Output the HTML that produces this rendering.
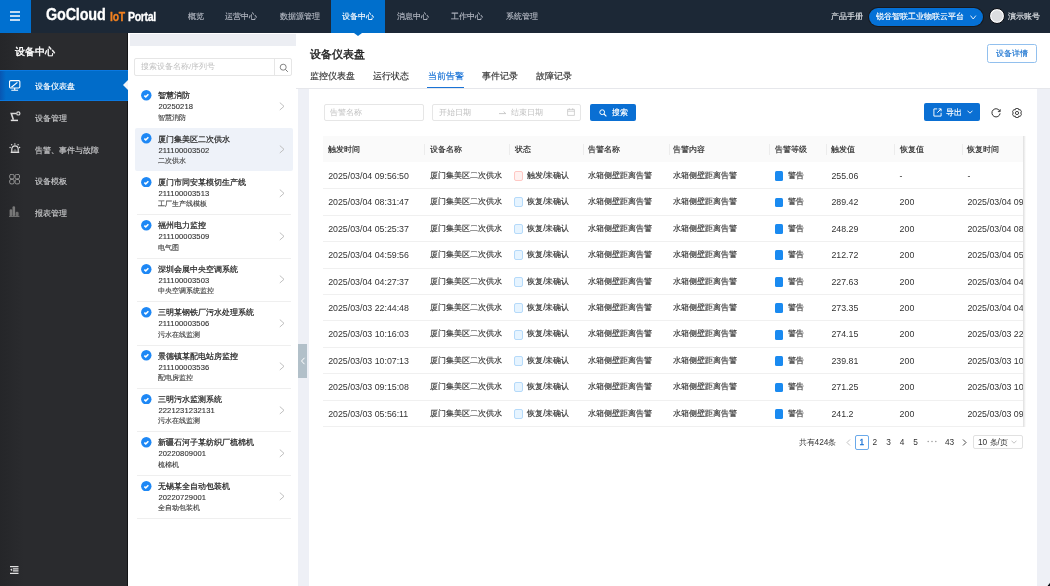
<!DOCTYPE html>
<html><head><meta charset="utf-8">
<style>
*{box-sizing:border-box;margin:0;padding:0}
html,body{width:1050px;height:586px;overflow:hidden;background:#fff;font-family:"Liberation Sans",sans-serif;color:#262626}
.a{position:absolute;white-space:nowrap}
#hdr{position:absolute;left:0;top:0;width:1050px;height:33px;background:#1c2836}
#ham{position:absolute;left:0;top:0;width:31px;height:33px;background:#0070d0}
#ham i{position:absolute;left:9.6px;width:10.7px;height:2px;background:#c3dcf3}
.nav{position:absolute;top:0.3px;height:33px;line-height:33px;font-size:8.4px;color:#b9bec8;-webkit-text-stroke:0.12px currentColor}
#side{position:absolute;left:0;top:33px;width:128px;height:553px;background:linear-gradient(90deg,#252629 0,#2a2b2e 24px,#2a2b2e 100%);border-right:1px solid #131416}
.si{position:absolute;left:0;width:127px;height:31.6px;line-height:31.6px;font-size:8.1px;color:#c9cacc;-webkit-text-stroke:0.15px currentColor}
.si span{position:absolute;left:35px;top:1.4px}
.si svg{position:absolute;left:9px;top:10px}
#list{position:absolute;left:128px;top:33px;width:170px;height:553px;background:#fff}
#main{position:absolute;left:298px;top:33px;width:752px;height:553px;background:#eef0f6}
#mh{position:absolute;left:-2px;top:0;width:754px;height:55.8px;background:#fff;border-bottom:1px solid #e6e7eb}
#card{position:absolute;left:11px;top:55.8px;width:728px;height:498px;background:#fff}
.lt{font-size:8.2px;line-height:12px;color:#262626;-webkit-text-stroke:0.22px #262626}
.ls{font-size:7.6px;line-height:12px;color:#333;letter-spacing:0.12px;-webkit-text-stroke:0.12px #333}
.lsub{font-size:7px;line-height:12px;color:#444;-webkit-text-stroke:0.15px #444}
.th{font-size:8px;line-height:26.2px;color:#262626;-webkit-text-stroke:0.15px #262626;padding-top:1px}
.td{font-size:8.3px;line-height:26.43px;color:#333;-webkit-text-stroke:0.15px #333;margin-top:-0.6px}
.tdn{font-size:8.8px;-webkit-text-stroke:0;margin-top:0;padding-top:0.4px}
.tab{position:absolute;top:68px;font-size:9px;line-height:16px;color:#333;-webkit-text-stroke:0.15px currentColor}
.inp{position:absolute;border:1px solid #e6e6e6;border-radius:2px;background:#fff}
.ph{font-size:8px;color:#c0c0c0}
.pg{position:absolute;top:435.4px;height:14.2px;line-height:14.2px;font-size:8.3px;color:#333;text-align:center}
</style></head>
<body><div id="root" style="position:absolute;left:0;top:0;width:1050px;height:586px;will-change:transform">
<div id="hdr">
  <div id="ham"><i style="top:11px"></i><i style="top:15px"></i><i style="top:19px"></i></div>
  <div class="a" style="left:46px;top:5.4px;font-size:16px;line-height:20px;font-weight:bold;color:#fff;letter-spacing:-0.2px;-webkit-text-stroke:0.3px #fff;transform:scaleX(0.9);transform-origin:0 0">GoCloud</div>
  <div class="a" style="left:110px;top:10px;font-size:12px;line-height:14px;font-weight:bold;color:#f5821f;-webkit-text-stroke:0.3px #f5821f;letter-spacing:-0.3px;transform:scaleX(0.87);transform-origin:0 0">IoT</div>
  <div class="a" style="left:128.1px;top:10px;font-size:12px;line-height:14px;font-weight:bold;color:#fff;-webkit-text-stroke:0.3px #fff;letter-spacing:-0.4px;transform:scaleX(0.88);transform-origin:0 0">Portal</div>
  <div class="nav" style="left:187.5px">概览</div>
  <div class="nav" style="left:225.4px">运营中心</div>
  <div class="nav" style="left:280.4px">数据源管理</div>
  <div class="nav" style="left:331px;width:54.3px;background:#006fcc;color:#fff;text-align:center">设备中心</div>
  <div class="a" style="left:354.4px;top:33px;width:0;height:0;border-left:4px solid transparent;border-right:4px solid transparent;border-top:3.5px solid #006fcc;z-index:5"></div>
  <div class="nav" style="left:396.9px">消息中心</div>
  <div class="nav" style="left:451.2px">工作中心</div>
  <div class="nav" style="left:505.5px">系统管理</div>
  <div class="nav" style="left:831px;color:#e3e6ea">产品手册</div>
  <div class="a" style="left:869.3px;top:8.3px;width:113.6px;height:17.4px;border-radius:9px;background:#0571d6;box-shadow:0 0 0 1px #18191d"></div>
  <div class="a" style="left:876px;top:8.3px;line-height:17.7px;font-size:8px;color:#fff;-webkit-text-stroke:0.15px #fff">锐谷智联工业物联云平台</div>
  <svg class="a" style="left:970px;top:14.5px" width="7" height="5" viewBox="0 0 7 5"><path d="M0.5 0.6 L3.2 4 L5.9 0.6" fill="none" stroke="#e8f1fb" stroke-width="0.95"/></svg>
  <div class="a" style="left:988.6px;top:8px;width:16px;height:16px;border-radius:50%;background:#dcdde0;border:1.2px solid #080b12;box-shadow:inset 0 0 0 1.2px #fafafa"></div>
  <div class="nav" style="left:1008px;color:#e3e6ea">演示账号</div>
</div>
<div id="side">
  <div class="a" style="left:14.6px;top:13px;font-size:10.3px;line-height:12px;color:#fff;-webkit-text-stroke:0.4px #fff">设备中心</div>
  <div class="si" style="top:36.5px;width:128px;background:linear-gradient(90deg,#0856b2 0,#016cc9 6px,#016cc9 100%);box-shadow:inset 0 1px 0 #0a78e0,inset 0 -1px 0 #0a78e0;color:#fff"><svg width="12" height="12" viewBox="0 0 12 12"><rect x="0.55" y="0.65" width="10.3" height="7.4" rx="1.2" fill="none" stroke="#fff" stroke-width="1.1"/><path d="M5.7 8.1V10.2 M2.3 10.3H9.1" fill="none" stroke="#fff" stroke-width="1.1"/><path d="M2.4 7.3L8.4 2.4" fill="none" stroke="#fff" stroke-width="1.2"/></svg><span>设备仪表盘</span></div>
  <div class="a" style="left:122.8px;top:47.3px;width:0;height:0;border-top:5.6px solid transparent;border-bottom:5.6px solid transparent;border-right:5.3px solid #f4f5f8;z-index:3"></div>
  <div class="si" style="top:68.1px"><svg width="12" height="12" viewBox="0 0 12 12"><path d="M1.8 9.4H9" fill="none" stroke="#e0e0e0" stroke-width="1.5"/><path d="M4.4 8.8L2.3 2.5H7" fill="none" stroke="#d8d8d8" stroke-width="1.6"/><circle cx="9.3" cy="2.4" r="1.6" fill="#2a2b2e" stroke="#dcdcdc" stroke-width="1.2"/></svg><span style="top:2px">设备管理</span></div>
  <div class="si" style="top:99.7px"><svg width="12" height="12" viewBox="0 0 12 12"><path d="M1.7 9.3H10.2" fill="none" stroke="#e6e6e6" stroke-width="1.3"/><path d="M2.8 9.3V6A3.2 3.2 0 0 1 9.2 6V9.3" fill="none" stroke="#dedede" stroke-width="1.2"/><path d="M5.1 9V7.6A0.9 0.9 0 0 1 6.9 7.6V9" fill="none" stroke="#bbb" stroke-width="0.7"/><circle cx="5.9" cy="0.9" r="0.75" fill="#ddd"/><circle cx="2.7" cy="1.7" r="0.7" fill="#ddd"/><circle cx="9.1" cy="1.7" r="0.7" fill="#ddd"/><circle cx="1.1" cy="4.5" r="0.7" fill="#ddd"/><circle cx="10.6" cy="4.5" r="0.7" fill="#ddd"/></svg><span style="top:2px">告警、事件与故障</span></div>
  <div class="si" style="top:131.3px"><svg width="12" height="12" viewBox="0 0 12 12"><rect x="0.7" y="0.4" width="4.4" height="4.4" rx="1.4" fill="none" stroke="#a0a0a0" stroke-width="0.9"/><rect x="6.1" y="0.4" width="4.4" height="4.4" rx="1.4" fill="none" stroke="#a0a0a0" stroke-width="0.9"/><rect x="0.7" y="5.5" width="4.4" height="4.4" rx="1.4" fill="none" stroke="#a0a0a0" stroke-width="0.9"/><rect x="6.1" y="5.5" width="4.4" height="4.4" rx="1.4" fill="none" stroke="#a0a0a0" stroke-width="0.9"/></svg><span style="top:2px">设备模板</span></div>
  <div class="si" style="top:162.9px"><svg width="12" height="12" viewBox="0 0 12 12"><rect x="0.6" y="3.2" width="2.6" height="6.8" rx="1.2" fill="#777"/><rect x="3.5" y="0.2" width="2.6" height="9.8" rx="1.2" fill="#7a7a7a"/><rect x="6.6" y="5.8" width="3" height="4.2" rx="1.3" fill="#6d6d6d"/><path d="M0 10.3H10.4" stroke="#808080" stroke-width="1"/></svg><span style="top:2px">报表管理</span></div>
  <svg class="a" style="left:10px;top:533px" width="9" height="8" viewBox="0 0 9 8"><path d="M0 0.6H8.5 M3 2.8H8.5 M3 4.9H8.5 M0 7.3H8.5" fill="none" stroke="#e0e0e0" stroke-width="1.2"/><path d="M2.2 2.3L0.2 3.8L2.2 5.3z" fill="#e0e0e0"/></svg>
</div>
<div id="list"></div>
<div id="main">
  <div id="mh"></div>
  <div id="card"></div>
</div>
<!-- main header -->
<div class="a" style="left:309.8px;top:45.6px;font-size:11.3px;line-height:16px;color:#1f1f1f;-webkit-text-stroke:0.4px #1f1f1f">设备仪表盘</div>
<div class="tab" style="left:310.2px">监控仪表盘</div>
<div class="tab" style="left:373.2px">运行状态</div>
<div class="tab" style="left:427.6px;color:#1a73d6">当前告警</div>
<div class="a" style="left:427.2px;top:86.7px;width:36.6px;height:1.7px;background:#1a73d6"></div>
<div class="tab" style="left:481.7px">事件记录</div>
<div class="tab" style="left:536.1px">故障记录</div>
<div class="a" style="left:987.4px;top:44.1px;width:50px;height:18.7px;border:1px solid #92c0ee;border-radius:2.5px;background:#fff;color:#1a73d0;font-size:8px;line-height:16.7px;padding-top:1.2px;text-align:center;-webkit-text-stroke:0.15px #1a73d0">设备详情</div>
<!-- filters -->
<div class="inp" style="left:323.5px;top:103.5px;width:100px;height:17.4px"></div>
<div class="a ph" style="left:330px;top:103.5px;line-height:17.4px">告警名称</div>
<div class="inp" style="left:432.2px;top:103.5px;width:148.4px;height:17.4px"></div>
<div class="a ph" style="left:439px;top:103.5px;line-height:17.4px">开始日期</div>
<svg class="a" style="left:498.5px;top:109.5px" width="8" height="5" viewBox="0 0 8 5"><path d="M0 3.6h6.8 M4.6 1.6l2.2 2" fill="none" stroke="#bdbdbd" stroke-width="0.8"/></svg>
<div class="a ph" style="left:510.5px;top:103.5px;line-height:17.4px">结束日期</div>
<svg class="a" style="left:566.5px;top:108px" width="8" height="8" viewBox="0 0 8 8"><path d="M0.6 1.4h6.8v6h-6.8z M0.6 3.2h6.8 M2.3 0.2v1.8 M5.7 0.2v1.8" fill="none" stroke="#c4c4c4" stroke-width="0.75"/></svg>
<div class="a" style="left:590px;top:103.5px;width:45.6px;height:17.5px;background:#0a6fd3;border-radius:2px"></div>
<svg class="a" style="left:599px;top:108.6px" width="8" height="8" viewBox="0 0 8 8"><circle cx="3.2" cy="3.2" r="2.4" fill="none" stroke="#fff" stroke-width="1"/><path d="M5 5L7.4 7.4" stroke="#fff" stroke-width="1.1"/></svg>
<div class="a" style="left:611.8px;top:104px;line-height:17.5px;font-size:8.2px;color:#fff;-webkit-text-stroke:0.15px #fff">搜索</div>
<div class="a" style="left:924.3px;top:103.3px;width:56.2px;height:17.9px;background:#0a6fd3;border-radius:2px"></div>
<svg class="a" style="left:932.8px;top:107.9px" width="9" height="9" viewBox="0 0 9 9"><path d="M4.2 0.9H0.9V8.1H8.1V4.8" fill="none" stroke="#fff" stroke-width="0.95"/><path d="M4.3 4.7L8.1 0.9 M5.6 0.9H8.1V3.4" fill="none" stroke="#fff" stroke-width="0.95"/></svg>
<div class="a" style="left:945.7px;top:104.3px;line-height:17.9px;font-size:8.2px;color:#fff;-webkit-text-stroke:0.15px #fff">导出</div>
<svg class="a" style="left:966.5px;top:110px" width="6" height="4" viewBox="0 0 6 4"><path d="M0.5 0.7L3 3.2L5.5 0.7" fill="none" stroke="#fff" stroke-width="0.9"/></svg>
<svg class="a" style="left:991.4px;top:107.6px" width="10" height="10" viewBox="0 0 10 10"><path d="M8.8 3.2A4.1 4.1 0 1 0 9.1 5.4" fill="none" stroke="#333" stroke-width="1"/><path d="M9.2 1.2V3.6H6.9" fill="none" stroke="#333" stroke-width="0.9"/></svg>
<svg class="a" style="left:1011.8px;top:107.8px" width="10" height="10" viewBox="0 0 10 10"><path d="M3.12 1.93 L3.70 0.48 L6.30 0.48 L6.88 1.93 L6.72 1.84 L8.26 1.62 L9.56 3.87 L8.60 5.10 L8.60 4.90 L9.56 6.13 L8.26 8.38 L6.72 8.16 L6.88 8.07 L6.30 9.52 L3.70 9.52 L3.12 8.07 L3.28 8.16 L1.74 8.38 L0.44 6.13 L1.40 4.90 L1.40 5.10 L0.44 3.87 L1.74 1.62 L3.28 1.84Z" fill="none" stroke="#333" stroke-width="0.9" stroke-linejoin="round"/><circle cx="5" cy="5" r="1.6" fill="none" stroke="#333" stroke-width="0.9"/></svg>
<div class="a" style="left:130px;top:34.2px;width:165.8px;height:12.2px;background:#eceef3"></div>
<div class="a" style="left:134.1px;top:58px;width:158.3px;height:18.4px;border:1px solid #e6e6e6;border-radius:2px"></div>
<div class="a" style="left:274.3px;top:58px;width:1px;height:18.4px;background:#e6e6e6"></div>
<div class="a ph" style="left:141px;top:58px;line-height:18px;font-size:8px;color:#c0c0c0">搜索设备名称/序列号</div>
<svg class="a" style="left:278.5px;top:62.5px" width="10" height="10" viewBox="0 0 10 10"><circle cx="4.2" cy="4.2" r="3" fill="none" stroke="#777" stroke-width="0.9"/><path d="M6.4 6.4L8.8 8.8" stroke="#777" stroke-width="1"/></svg>
<div class="a" style="left:134.5px;top:127.8px;width:158.4px;height:43.4px;border-radius:2px;background:#eef2f9"></div>
<svg class="a" style="left:141.3px;top:90.0px" width="10.6" height="10.6" viewBox="0 0 10.6 10.6"><circle cx="5.3" cy="5.3" r="5.2" fill="#1e88f5"/><path d="M3.3 5.6L4.8 6.9L7.4 4.3" fill="none" stroke="#fff" stroke-width="1.5"/></svg>
<div class="a lt" style="left:158.4px;top:90.2px">智慧消防</div>
<div class="a ls" style="left:158.4px;top:101.1px">20250218</div>
<div class="a lsub" style="left:158.4px;top:111.6px">智慧消防</div>
<svg class="a" style="left:279.4px;top:101.7px" width="6" height="9" viewBox="0 0 6 9"><path d="M0.8 0.6L5 4.3L0.8 8" fill="none" stroke="#b9b9b9" stroke-width="0.9"/></svg>
<svg class="a" style="left:141.3px;top:133.4px" width="10.6" height="10.6" viewBox="0 0 10.6 10.6"><circle cx="5.3" cy="5.3" r="5.2" fill="#1e88f5"/><path d="M3.3 5.6L4.8 6.9L7.4 4.3" fill="none" stroke="#fff" stroke-width="1.5"/></svg>
<div class="a lt" style="left:158.4px;top:133.6px">厦门集美区二次供水</div>
<div class="a ls" style="left:158.4px;top:144.5px">211100003502</div>
<div class="a lsub" style="left:158.4px;top:155.0px">二次供水</div>
<svg class="a" style="left:279.4px;top:145.1px" width="6" height="9" viewBox="0 0 6 9"><path d="M0.8 0.6L5 4.3L0.8 8" fill="none" stroke="#b9b9b9" stroke-width="0.9"/></svg>
<div class="a" style="left:136.7px;top:214.4px;width:154.5px;height:1px;background:#efefef"></div>
<svg class="a" style="left:141.3px;top:176.8px" width="10.6" height="10.6" viewBox="0 0 10.6 10.6"><circle cx="5.3" cy="5.3" r="5.2" fill="#1e88f5"/><path d="M3.3 5.6L4.8 6.9L7.4 4.3" fill="none" stroke="#fff" stroke-width="1.5"/></svg>
<div class="a lt" style="left:158.4px;top:177.0px">厦门市同安某模切生产线</div>
<div class="a ls" style="left:158.4px;top:187.9px">211100003513</div>
<div class="a lsub" style="left:158.4px;top:198.4px">工厂生产线模板</div>
<svg class="a" style="left:279.4px;top:188.5px" width="6" height="9" viewBox="0 0 6 9"><path d="M0.8 0.6L5 4.3L0.8 8" fill="none" stroke="#b9b9b9" stroke-width="0.9"/></svg>
<div class="a" style="left:136.7px;top:257.8px;width:154.5px;height:1px;background:#efefef"></div>
<svg class="a" style="left:141.3px;top:220.2px" width="10.6" height="10.6" viewBox="0 0 10.6 10.6"><circle cx="5.3" cy="5.3" r="5.2" fill="#1e88f5"/><path d="M3.3 5.6L4.8 6.9L7.4 4.3" fill="none" stroke="#fff" stroke-width="1.5"/></svg>
<div class="a lt" style="left:158.4px;top:220.4px">福州电力监控</div>
<div class="a ls" style="left:158.4px;top:231.3px">211100003509</div>
<div class="a lsub" style="left:158.4px;top:241.8px">电气图</div>
<svg class="a" style="left:279.4px;top:231.9px" width="6" height="9" viewBox="0 0 6 9"><path d="M0.8 0.6L5 4.3L0.8 8" fill="none" stroke="#b9b9b9" stroke-width="0.9"/></svg>
<div class="a" style="left:136.7px;top:301.2px;width:154.5px;height:1px;background:#efefef"></div>
<svg class="a" style="left:141.3px;top:263.6px" width="10.6" height="10.6" viewBox="0 0 10.6 10.6"><circle cx="5.3" cy="5.3" r="5.2" fill="#1e88f5"/><path d="M3.3 5.6L4.8 6.9L7.4 4.3" fill="none" stroke="#fff" stroke-width="1.5"/></svg>
<div class="a lt" style="left:158.4px;top:263.8px">深圳会展中央空调系统</div>
<div class="a ls" style="left:158.4px;top:274.7px">211100003503</div>
<div class="a lsub" style="left:158.4px;top:285.2px">中央空调系统监控</div>
<svg class="a" style="left:279.4px;top:275.3px" width="6" height="9" viewBox="0 0 6 9"><path d="M0.8 0.6L5 4.3L0.8 8" fill="none" stroke="#b9b9b9" stroke-width="0.9"/></svg>
<div class="a" style="left:136.7px;top:344.6px;width:154.5px;height:1px;background:#efefef"></div>
<svg class="a" style="left:141.3px;top:307.0px" width="10.6" height="10.6" viewBox="0 0 10.6 10.6"><circle cx="5.3" cy="5.3" r="5.2" fill="#1e88f5"/><path d="M3.3 5.6L4.8 6.9L7.4 4.3" fill="none" stroke="#fff" stroke-width="1.5"/></svg>
<div class="a lt" style="left:158.4px;top:307.2px">三明某钢铁厂污水处理系统</div>
<div class="a ls" style="left:158.4px;top:318.1px">211100003506</div>
<div class="a lsub" style="left:158.4px;top:328.6px">污水在线监测</div>
<svg class="a" style="left:279.4px;top:318.7px" width="6" height="9" viewBox="0 0 6 9"><path d="M0.8 0.6L5 4.3L0.8 8" fill="none" stroke="#b9b9b9" stroke-width="0.9"/></svg>
<div class="a" style="left:136.7px;top:388.0px;width:154.5px;height:1px;background:#efefef"></div>
<svg class="a" style="left:141.3px;top:350.4px" width="10.6" height="10.6" viewBox="0 0 10.6 10.6"><circle cx="5.3" cy="5.3" r="5.2" fill="#1e88f5"/><path d="M3.3 5.6L4.8 6.9L7.4 4.3" fill="none" stroke="#fff" stroke-width="1.5"/></svg>
<div class="a lt" style="left:158.4px;top:350.6px">景德镇某配电站房监控</div>
<div class="a ls" style="left:158.4px;top:361.5px">211100003536</div>
<div class="a lsub" style="left:158.4px;top:372.0px">配电房监控</div>
<svg class="a" style="left:279.4px;top:362.1px" width="6" height="9" viewBox="0 0 6 9"><path d="M0.8 0.6L5 4.3L0.8 8" fill="none" stroke="#b9b9b9" stroke-width="0.9"/></svg>
<div class="a" style="left:136.7px;top:431.4px;width:154.5px;height:1px;background:#efefef"></div>
<svg class="a" style="left:141.3px;top:393.8px" width="10.6" height="10.6" viewBox="0 0 10.6 10.6"><circle cx="5.3" cy="5.3" r="5.2" fill="#1e88f5"/><path d="M3.3 5.6L4.8 6.9L7.4 4.3" fill="none" stroke="#fff" stroke-width="1.5"/></svg>
<div class="a lt" style="left:158.4px;top:394.0px">三明污水监测系统</div>
<div class="a ls" style="left:158.4px;top:404.9px">2221231232131</div>
<div class="a lsub" style="left:158.4px;top:415.4px">污水在线监测</div>
<svg class="a" style="left:279.4px;top:405.5px" width="6" height="9" viewBox="0 0 6 9"><path d="M0.8 0.6L5 4.3L0.8 8" fill="none" stroke="#b9b9b9" stroke-width="0.9"/></svg>
<div class="a" style="left:136.7px;top:474.8px;width:154.5px;height:1px;background:#efefef"></div>
<svg class="a" style="left:141.3px;top:437.2px" width="10.6" height="10.6" viewBox="0 0 10.6 10.6"><circle cx="5.3" cy="5.3" r="5.2" fill="#1e88f5"/><path d="M3.3 5.6L4.8 6.9L7.4 4.3" fill="none" stroke="#fff" stroke-width="1.5"/></svg>
<div class="a lt" style="left:158.4px;top:437.4px">新疆石河子某纺织厂梳棉机</div>
<div class="a ls" style="left:158.4px;top:448.3px">20220809001</div>
<div class="a lsub" style="left:158.4px;top:458.8px">梳棉机</div>
<svg class="a" style="left:279.4px;top:448.9px" width="6" height="9" viewBox="0 0 6 9"><path d="M0.8 0.6L5 4.3L0.8 8" fill="none" stroke="#b9b9b9" stroke-width="0.9"/></svg>
<div class="a" style="left:136.7px;top:518.2px;width:154.5px;height:1px;background:#efefef"></div>
<svg class="a" style="left:141.3px;top:480.6px" width="10.6" height="10.6" viewBox="0 0 10.6 10.6"><circle cx="5.3" cy="5.3" r="5.2" fill="#1e88f5"/><path d="M3.3 5.6L4.8 6.9L7.4 4.3" fill="none" stroke="#fff" stroke-width="1.5"/></svg>
<div class="a lt" style="left:158.4px;top:480.8px">无锡某全自动包装机</div>
<div class="a ls" style="left:158.4px;top:491.7px">20220729001</div>
<div class="a lsub" style="left:158.4px;top:502.2px">全自动包装机</div>
<svg class="a" style="left:279.4px;top:492.3px" width="6" height="9" viewBox="0 0 6 9"><path d="M0.8 0.6L5 4.3L0.8 8" fill="none" stroke="#b9b9b9" stroke-width="0.9"/></svg>
<div class="a" style="left:298.4px;top:344.3px;width:8.7px;height:33.6px;background:#b2c0c9"></div>
<svg class="a" style="left:300px;top:357px" width="6" height="8" viewBox="0 0 6 8"><path d="M4.5 0.8L1.5 4L4.5 7.2" fill="none" stroke="#fff" stroke-width="1"/></svg>
<div style="position:absolute;left:0;top:0;width:1022.8px;height:586px;overflow:hidden"><div class="a" style="left:323.3px;top:136.2px;width:699.5px;height:26.2px;background:#fafafa"></div>
<div class="a" style="left:424.0px;top:144px;width:1px;height:11px;background:#ececec"></div>
<div class="a" style="left:509.1px;top:144px;width:1px;height:11px;background:#ececec"></div>
<div class="a" style="left:582.9px;top:144px;width:1px;height:11px;background:#ececec"></div>
<div class="a" style="left:668.6px;top:144px;width:1px;height:11px;background:#ececec"></div>
<div class="a" style="left:769.2px;top:144px;width:1px;height:11px;background:#ececec"></div>
<div class="a" style="left:825.9px;top:144px;width:1px;height:11px;background:#ececec"></div>
<div class="a" style="left:894.2px;top:144px;width:1px;height:11px;background:#ececec"></div>
<div class="a" style="left:962.1px;top:144px;width:1px;height:11px;background:#ececec"></div>
<div class="a th" style="left:328.2px;top:136.2px">触发时间</div>
<div class="a th" style="left:430px;top:136.2px">设备名称</div>
<div class="a th" style="left:514.6px;top:136.2px">状态</div>
<div class="a th" style="left:588.4px;top:136.2px">告警名称</div>
<div class="a th" style="left:673px;top:136.2px">告警内容</div>
<div class="a th" style="left:775.2px;top:136.2px">告警等级</div>
<div class="a th" style="left:831.4px;top:136.2px">触发值</div>
<div class="a th" style="left:899.6px;top:136.2px">恢复值</div>
<div class="a th" style="left:967.4px;top:136.2px">恢复时间</div>
<div class="a" style="left:323.3px;top:188.33px;width:699.5px;height:1px;background:#f0f0f0"></div>
<div class="a td tdn" style="left:328.2px;top:162.40px">2025/03/04 09:56:50</div>
<div class="a td" style="left:430px;top:162.40px">厦门集美区二次供水</div>
<div class="a td" style="left:588.4px;top:162.40px">水箱侧壁距离告警</div>
<div class="a td" style="left:673px;top:162.40px">水箱侧壁距离告警</div>
<div class="a td tdn" style="left:831.4px;top:162.40px">255.06</div>
<div class="a td tdn" style="left:899.6px;top:162.40px">-</div>
<div class="a td tdn" style="left:967.4px;top:162.40px">-</div>
<div class="a" style="left:514px;top:171.00px;width:9px;height:10px;border-radius:2px;background:#fff1f0;border:1px solid #ffc8c4"></div>
<div class="a td" style="left:527.2px;top:162.40px">触发/未确认</div>
<div class="a" style="left:774.7px;top:171.20px;width:8.8px;height:9.8px;border-radius:1.5px;background:#1a8af0"></div>
<div class="a td" style="left:788.3px;top:162.40px">警告</div>
<div class="a" style="left:323.3px;top:214.76px;width:699.5px;height:1px;background:#f0f0f0"></div>
<div class="a td tdn" style="left:328.2px;top:188.83px">2025/03/04 08:31:47</div>
<div class="a td" style="left:430px;top:188.83px">厦门集美区二次供水</div>
<div class="a td" style="left:588.4px;top:188.83px">水箱侧壁距离告警</div>
<div class="a td" style="left:673px;top:188.83px">水箱侧壁距离告警</div>
<div class="a td tdn" style="left:831.4px;top:188.83px">289.42</div>
<div class="a td tdn" style="left:899.6px;top:188.83px">200</div>
<div class="a td tdn" style="left:967.4px;top:188.83px">2025/03/04 09:02:11</div>
<div class="a" style="left:514px;top:197.43px;width:9px;height:10px;border-radius:2px;background:#e6f4ff;border:1px solid #b5dafa"></div>
<div class="a td" style="left:527.2px;top:188.83px">恢复/未确认</div>
<div class="a" style="left:774.7px;top:197.63px;width:8.8px;height:9.8px;border-radius:1.5px;background:#1a8af0"></div>
<div class="a td" style="left:788.3px;top:188.83px">警告</div>
<div class="a" style="left:323.3px;top:241.19px;width:699.5px;height:1px;background:#f0f0f0"></div>
<div class="a td tdn" style="left:328.2px;top:215.26px">2025/03/04 05:25:37</div>
<div class="a td" style="left:430px;top:215.26px">厦门集美区二次供水</div>
<div class="a td" style="left:588.4px;top:215.26px">水箱侧壁距离告警</div>
<div class="a td" style="left:673px;top:215.26px">水箱侧壁距离告警</div>
<div class="a td tdn" style="left:831.4px;top:215.26px">248.29</div>
<div class="a td tdn" style="left:899.6px;top:215.26px">200</div>
<div class="a td tdn" style="left:967.4px;top:215.26px">2025/03/04 08:12:40</div>
<div class="a" style="left:514px;top:223.86px;width:9px;height:10px;border-radius:2px;background:#e6f4ff;border:1px solid #b5dafa"></div>
<div class="a td" style="left:527.2px;top:215.26px">恢复/未确认</div>
<div class="a" style="left:774.7px;top:224.06px;width:8.8px;height:9.8px;border-radius:1.5px;background:#1a8af0"></div>
<div class="a td" style="left:788.3px;top:215.26px">警告</div>
<div class="a" style="left:323.3px;top:267.62px;width:699.5px;height:1px;background:#f0f0f0"></div>
<div class="a td tdn" style="left:328.2px;top:241.69px">2025/03/04 04:59:56</div>
<div class="a td" style="left:430px;top:241.69px">厦门集美区二次供水</div>
<div class="a td" style="left:588.4px;top:241.69px">水箱侧壁距离告警</div>
<div class="a td" style="left:673px;top:241.69px">水箱侧壁距离告警</div>
<div class="a td tdn" style="left:831.4px;top:241.69px">212.72</div>
<div class="a td tdn" style="left:899.6px;top:241.69px">200</div>
<div class="a td tdn" style="left:967.4px;top:241.69px">2025/03/04 05:10:22</div>
<div class="a" style="left:514px;top:250.29px;width:9px;height:10px;border-radius:2px;background:#e6f4ff;border:1px solid #b5dafa"></div>
<div class="a td" style="left:527.2px;top:241.69px">恢复/未确认</div>
<div class="a" style="left:774.7px;top:250.49px;width:8.8px;height:9.8px;border-radius:1.5px;background:#1a8af0"></div>
<div class="a td" style="left:788.3px;top:241.69px">警告</div>
<div class="a" style="left:323.3px;top:294.05px;width:699.5px;height:1px;background:#f0f0f0"></div>
<div class="a td tdn" style="left:328.2px;top:268.12px">2025/03/04 04:27:37</div>
<div class="a td" style="left:430px;top:268.12px">厦门集美区二次供水</div>
<div class="a td" style="left:588.4px;top:268.12px">水箱侧壁距离告警</div>
<div class="a td" style="left:673px;top:268.12px">水箱侧壁距离告警</div>
<div class="a td tdn" style="left:831.4px;top:268.12px">227.63</div>
<div class="a td tdn" style="left:899.6px;top:268.12px">200</div>
<div class="a td tdn" style="left:967.4px;top:268.12px">2025/03/04 04:50:17</div>
<div class="a" style="left:514px;top:276.72px;width:9px;height:10px;border-radius:2px;background:#e6f4ff;border:1px solid #b5dafa"></div>
<div class="a td" style="left:527.2px;top:268.12px">恢复/未确认</div>
<div class="a" style="left:774.7px;top:276.92px;width:8.8px;height:9.8px;border-radius:1.5px;background:#1a8af0"></div>
<div class="a td" style="left:788.3px;top:268.12px">警告</div>
<div class="a" style="left:323.3px;top:320.48px;width:699.5px;height:1px;background:#f0f0f0"></div>
<div class="a td tdn" style="left:328.2px;top:294.55px">2025/03/03 22:44:48</div>
<div class="a td" style="left:430px;top:294.55px">厦门集美区二次供水</div>
<div class="a td" style="left:588.4px;top:294.55px">水箱侧壁距离告警</div>
<div class="a td" style="left:673px;top:294.55px">水箱侧壁距离告警</div>
<div class="a td tdn" style="left:831.4px;top:294.55px">273.35</div>
<div class="a td tdn" style="left:899.6px;top:294.55px">200</div>
<div class="a td tdn" style="left:967.4px;top:294.55px">2025/03/04 04:12:09</div>
<div class="a" style="left:514px;top:303.15px;width:9px;height:10px;border-radius:2px;background:#e6f4ff;border:1px solid #b5dafa"></div>
<div class="a td" style="left:527.2px;top:294.55px">恢复/未确认</div>
<div class="a" style="left:774.7px;top:303.35px;width:8.8px;height:9.8px;border-radius:1.5px;background:#1a8af0"></div>
<div class="a td" style="left:788.3px;top:294.55px">警告</div>
<div class="a" style="left:323.3px;top:346.91px;width:699.5px;height:1px;background:#f0f0f0"></div>
<div class="a td tdn" style="left:328.2px;top:320.98px">2025/03/03 10:16:03</div>
<div class="a td" style="left:430px;top:320.98px">厦门集美区二次供水</div>
<div class="a td" style="left:588.4px;top:320.98px">水箱侧壁距离告警</div>
<div class="a td" style="left:673px;top:320.98px">水箱侧壁距离告警</div>
<div class="a td tdn" style="left:831.4px;top:320.98px">274.15</div>
<div class="a td tdn" style="left:899.6px;top:320.98px">200</div>
<div class="a td tdn" style="left:967.4px;top:320.98px">2025/03/03 22:31:52</div>
<div class="a" style="left:514px;top:329.58px;width:9px;height:10px;border-radius:2px;background:#e6f4ff;border:1px solid #b5dafa"></div>
<div class="a td" style="left:527.2px;top:320.98px">恢复/未确认</div>
<div class="a" style="left:774.7px;top:329.78px;width:8.8px;height:9.8px;border-radius:1.5px;background:#1a8af0"></div>
<div class="a td" style="left:788.3px;top:320.98px">警告</div>
<div class="a" style="left:323.3px;top:373.34px;width:699.5px;height:1px;background:#f0f0f0"></div>
<div class="a td tdn" style="left:328.2px;top:347.41px">2025/03/03 10:07:13</div>
<div class="a td" style="left:430px;top:347.41px">厦门集美区二次供水</div>
<div class="a td" style="left:588.4px;top:347.41px">水箱侧壁距离告警</div>
<div class="a td" style="left:673px;top:347.41px">水箱侧壁距离告警</div>
<div class="a td tdn" style="left:831.4px;top:347.41px">239.81</div>
<div class="a td tdn" style="left:899.6px;top:347.41px">200</div>
<div class="a td tdn" style="left:967.4px;top:347.41px">2025/03/03 10:12:30</div>
<div class="a" style="left:514px;top:356.01px;width:9px;height:10px;border-radius:2px;background:#e6f4ff;border:1px solid #b5dafa"></div>
<div class="a td" style="left:527.2px;top:347.41px">恢复/未确认</div>
<div class="a" style="left:774.7px;top:356.21px;width:8.8px;height:9.8px;border-radius:1.5px;background:#1a8af0"></div>
<div class="a td" style="left:788.3px;top:347.41px">警告</div>
<div class="a" style="left:323.3px;top:399.77px;width:699.5px;height:1px;background:#f0f0f0"></div>
<div class="a td tdn" style="left:328.2px;top:373.84px">2025/03/03 09:15:08</div>
<div class="a td" style="left:430px;top:373.84px">厦门集美区二次供水</div>
<div class="a td" style="left:588.4px;top:373.84px">水箱侧壁距离告警</div>
<div class="a td" style="left:673px;top:373.84px">水箱侧壁距离告警</div>
<div class="a td tdn" style="left:831.4px;top:373.84px">271.25</div>
<div class="a td tdn" style="left:899.6px;top:373.84px">200</div>
<div class="a td tdn" style="left:967.4px;top:373.84px">2025/03/03 10:02:44</div>
<div class="a" style="left:514px;top:382.44px;width:9px;height:10px;border-radius:2px;background:#e6f4ff;border:1px solid #b5dafa"></div>
<div class="a td" style="left:527.2px;top:373.84px">恢复/未确认</div>
<div class="a" style="left:774.7px;top:382.64px;width:8.8px;height:9.8px;border-radius:1.5px;background:#1a8af0"></div>
<div class="a td" style="left:788.3px;top:373.84px">警告</div>
<div class="a" style="left:323.3px;top:426.20px;width:699.5px;height:1px;background:#f0f0f0"></div>
<div class="a td tdn" style="left:328.2px;top:400.27px">2025/03/03 05:56:11</div>
<div class="a td" style="left:430px;top:400.27px">厦门集美区二次供水</div>
<div class="a td" style="left:588.4px;top:400.27px">水箱侧壁距离告警</div>
<div class="a td" style="left:673px;top:400.27px">水箱侧壁距离告警</div>
<div class="a td tdn" style="left:831.4px;top:400.27px">241.2</div>
<div class="a td tdn" style="left:899.6px;top:400.27px">200</div>
<div class="a td tdn" style="left:967.4px;top:400.27px">2025/03/03 09:08:51</div>
<div class="a" style="left:514px;top:408.87px;width:9px;height:10px;border-radius:2px;background:#e6f4ff;border:1px solid #b5dafa"></div>
<div class="a td" style="left:527.2px;top:400.27px">恢复/未确认</div>
<div class="a" style="left:774.7px;top:409.07px;width:8.8px;height:9.8px;border-radius:1.5px;background:#1a8af0"></div>
<div class="a td" style="left:788.3px;top:400.27px">警告</div></div>
<!-- pagination -->
<div class="a" style="left:1022.8px;top:136.2px;width:3.5px;height:290.5px;background:linear-gradient(90deg,rgba(0,0,0,0.13),rgba(0,0,0,0))"></div>
<div class="a" style="left:798.6px;top:435.4px;line-height:14.2px;font-size:8.3px;color:#333">共有424条</div>
<svg class="a" style="left:846px;top:439px" width="5" height="7" viewBox="0 0 5 7"><path d="M4 0.5L1 3.5L4 6.5" fill="none" stroke="#bbb" stroke-width="0.9"/></svg>
<div class="pg" style="left:854.8px;width:14px;border:1px solid #6aa9ea;border-radius:2px;color:#1a73d6;line-height:12.2px;-webkit-text-stroke:0.3px #1a73d6">1</div>
<div class="pg" style="left:868.8px;width:12px">2</div>
<div class="pg" style="left:882.5px;width:12px">3</div>
<div class="pg" style="left:896px;width:12px">4</div>
<div class="pg" style="left:909.5px;width:12px">5</div>
<svg class="a" style="left:926.5px;top:440.3px" width="10" height="3" viewBox="0 0 10 3"><circle cx="1.2" cy="1.5" r="0.75" fill="#999"/><circle cx="5" cy="1.5" r="0.75" fill="#999"/><circle cx="8.8" cy="1.5" r="0.75" fill="#999"/></svg>
<div class="pg" style="left:942px;width:15px">43</div>
<svg class="a" style="left:962px;top:439px" width="5" height="7" viewBox="0 0 5 7"><path d="M1 0.5L4 3.5L1 6.5" fill="none" stroke="#333" stroke-width="0.9"/></svg>
<div class="a" style="left:973.2px;top:435.4px;width:50.2px;height:13.8px;border:1px solid #e1e1e1;border-radius:2px"></div>
<div class="a" style="left:978px;top:436.2px;line-height:13.8px;font-size:8.3px;color:#333">10 条/页</div>
<svg class="a" style="left:1011px;top:440px" width="6" height="4" viewBox="0 0 6 4"><path d="M0.5 0.7L3 3.2L5.5 0.7" fill="none" stroke="#bbb" stroke-width="0.9"/></svg>
<svg class="a" style="left:1044px;top:579px" width="8" height="8" viewBox="0 0 8 8"><path d="M7.5 1.5L7.5 8L2 8Z" fill="#0a0f18" stroke="#fff" stroke-width="1"/></svg>
</div></body></html>
